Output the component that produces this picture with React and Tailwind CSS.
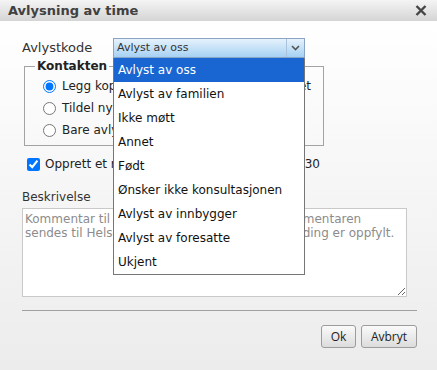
import React from 'react'

const options = [
  'Avlyst av oss',
  'Avlyst av familien',
  'Ikke møtt',
  'Annet',
  'Født',
  'Ønsker ikke konsultasjonen',
  'Avlyst av innbygger',
  'Avlyst av foresatte',
  'Ukjent',
]

const radios = [
  'Legg kopi av avlysningen i pasientarkivet',
  'Tildel ny time til pasienten',
  'Bare avlys timen',
]

const App = () => {
  return (
    <div className="w-[437px] h-[370px] flex flex-col overflow-hidden font-['DejaVu_Sans',sans-serif] text-[#222]">
      {/* title bar */}
      <div className="h-[21px] flex items-center justify-between pl-[8px] pr-[10px] bg-gradient-to-b from-[#f4f4f4] to-[#d5d5d5]">
        <span className="text-[13px] font-bold text-[#404040]">Avlysning av time</span>
        <svg width="12" height="11" viewBox="0 0 12 11">
          <path d="M1.5 1 L10.5 10 M10.5 1 L1.5 10" stroke="#454545" strokeWidth="2.4" />
        </svg>
      </div>

      {/* body */}
      <div className="flex-1 flex flex-col pl-[22px] pr-[20px] pt-[17px] bg-gradient-to-b from-[#ffffff] to-[#ececec]">
        <div className="flex items-center h-[20px]">
          <span className="w-[91px] text-[13px] text-[#333]">Avlystkode</span>
          <div className="relative w-[192px] h-[20px]">
            <div className="h-full flex border border-[#8aa4c2] bg-gradient-to-b from-[#e6f2fc] to-[#a6d1f3]">
              <span className="flex-1 pl-[3px] text-[11px] leading-[18px] text-[#333]">Avlyst av oss</span>
              <span className="w-[18px] flex items-center justify-center border-l border-[#a9c3dd]">
                <svg width="9" height="6" viewBox="0 0 9 6">
                  <path d="M1 1 L4.5 4.5 L8 1" stroke="#555" strokeWidth="1.6" fill="none" />
                </svg>
              </span>
            </div>
            <ul className="absolute top-full left-0 z-10 w-[192px] bg-white border-x border-b border-[#767676]">
              {options.map((o, i) => (
                <li
                  key={o}
                  className={
                    i === 0
                      ? 'h-[24px] pl-[4px] text-[12px] leading-[25px] bg-[#1966d2] text-white'
                      : 'h-[24px] pl-[4px] text-[12px] leading-[25px] text-[#111]'
                  }
                >
                  {o}
                </li>
              ))}
            </ul>
          </div>
        </div>

        <fieldset className="mt-[1px] ml-[2px] w-[300px] border border-[#a3a3a3] pl-[18px] pt-[2px] pb-[4px]">
          <legend className="ml-[-8px] px-[2px] text-[12px] leading-[14px] font-bold text-[#222]">Kontakten</legend>
          {radios.map((r, i) => (
            <label key={r} className="flex items-center h-[22px] gap-[6px] text-[12px] whitespace-nowrap">
              <input type="radio" name="kontakt" defaultChecked={i === 0} className="m-0 w-[13px] h-[13px]" />
              {r}
            </label>
          ))}
        </fieldset>

        <label className="mt-[8px] ml-[5px] flex items-center h-[20px] gap-[5px] text-[12px] whitespace-nowrap">
          <input type="checkbox" defaultChecked className="m-0 w-[13px] h-[13px]" />
          Opprett et nytt notat i journalen ved kl. 10:30
        </label>

        <span className="mt-[16px] text-[12px] leading-[15px] text-[#333]">Beskrivelse</span>
        <textarea
          className="mt-[3px] w-[385px] h-[89px] bg-white border border-[#c9c9c9] pl-[2px] pt-[3px] text-[12px] leading-[14px] placeholder:text-[#8c8c8c] outline-none"
          placeholder={'Kommentar til innbygger etter avlysning. Kommentaren\nsendes til Helsenorge dersom kravene for melding er oppfylt.'}
        />

        <div className="mt-[13px] border-t border-[#a0a0a0]" />

        <div className="mt-[14px] flex justify-end gap-[5px] font-['Open_Sans',sans-serif] text-[12px] text-[#222]">
          <button className="w-[35px] h-[23px] rounded-[3px] border border-[#9c9c9c] bg-gradient-to-b from-[#fafafa] to-[#dcdcdc]">Ok</button>
          <button className="w-[56px] h-[23px] rounded-[3px] border border-[#9c9c9c] bg-gradient-to-b from-[#fafafa] to-[#dcdcdc]">Avbryt</button>
        </div>
      </div>
    </div>
  )
}

export default App
